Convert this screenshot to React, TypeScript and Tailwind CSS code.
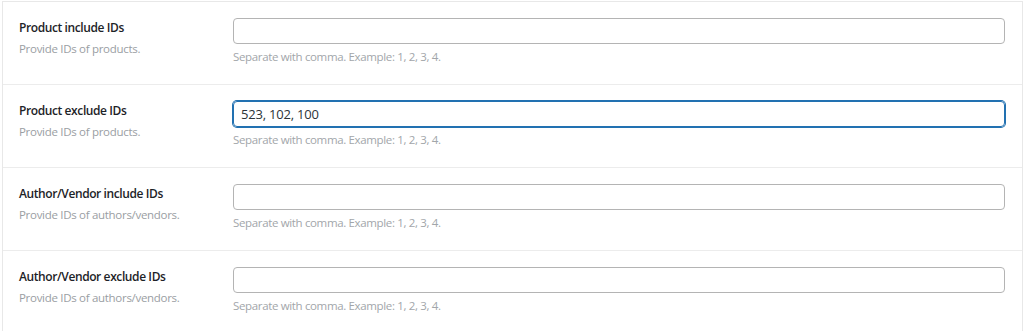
const fields = [
  {
    label: "Product include IDs",
    desc: "Provide IDs of products.",
    value: "",
  },
  {
    label: "Product exclude IDs",
    desc: "Provide IDs of products.",
    value: "523, 102, 100",
    focused: true,
  },
  {
    label: "Author/Vendor include IDs",
    desc: "Provide IDs of authors/vendors.",
    value: "",
  },
  {
    label: "Author/Vendor exclude IDs",
    desc: "Provide IDs of authors/vendors.",
    value: "",
  },
];

const App = () => {
  return (
    <div className="w-[1024px] h-[331px] bg-white overflow-hidden font-['Open_Sans',sans-serif] pt-px">
      <div className="ml-[2px] mr-px border-l border-r border-t border-[#e8e8e8] bg-white">
        {fields.map((f) => (
          <div
            key={f.label}
            className="flex h-[83px] border-b border-[#ececec]"
          >
            <div className="w-[230px] pl-[16px] pt-[16px]">
              <div className="text-[12px] font-semibold text-[#1d2327] leading-[20px] tracking-[-0.4px]">
                {f.label}
              </div>
              <div className="text-[11.5px] text-[#9a9ea3] leading-[20px] mt-[1px] tracking-[-0.3px]">
                {f.desc}
              </div>
            </div>
            <div className="flex-1 pt-[16px] pr-[17px]">
              <input
                readOnly
                value={f.value}
                className={
                  f.focused
                    ? "w-full h-[26px] rounded-[4px] border border-[#2271b1] shadow-[0_0_0_1px_#2271b1] px-[7px] text-[13px] text-[#2c3338] outline-none tracking-[-0.2px]"
                    : "w-full h-[26px] rounded-[4px] border border-[#b4b4b4] px-[7px] text-[13px] text-[#2c3338] outline-none"
                }
              />
              <div className="text-[11.5px] text-[#a2a6aa] leading-[20px] mt-[3px] tracking-[-0.35px]">
                Separate with comma. Example: 1, 2, 3, 4.
              </div>
            </div>
          </div>
        ))}
      </div>
    </div>
  );
};

export default App;
